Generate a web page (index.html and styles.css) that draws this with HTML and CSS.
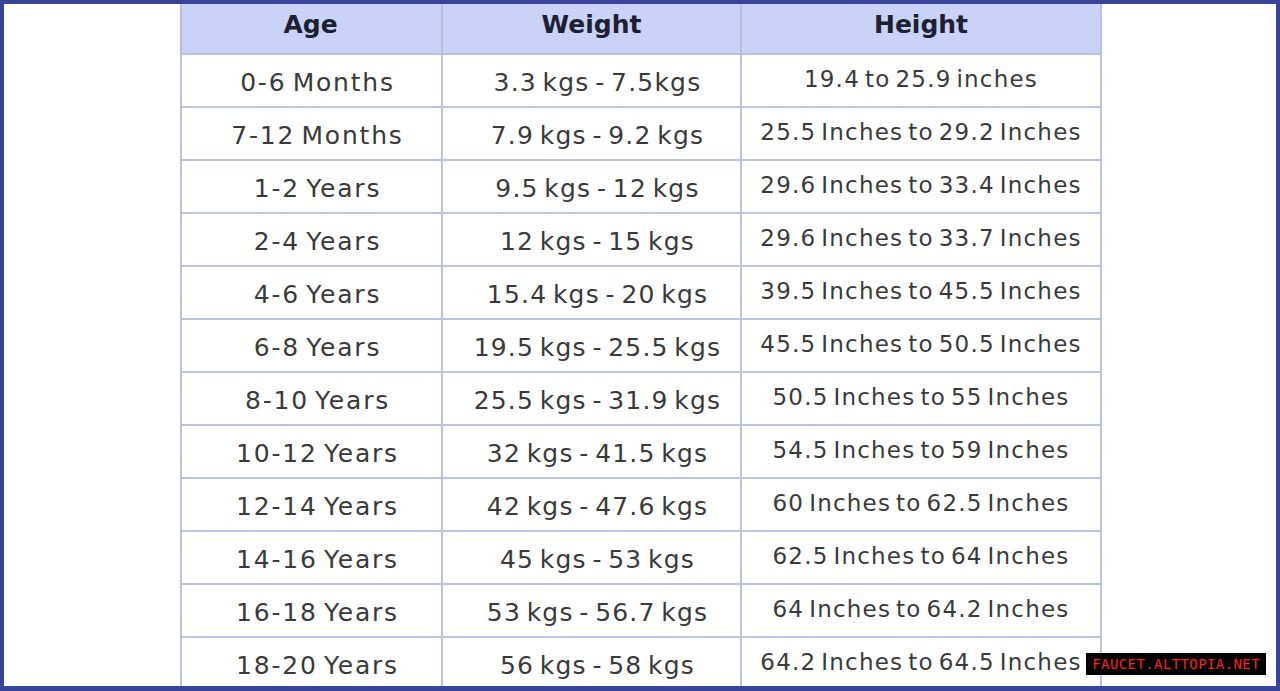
FILE: index.html
```html
<!DOCTYPE html>
<html>
<head>
  <title>Child Growth Chart</title>
  <link rel="stylesheet" href="styles.css">
</head>
<body>
  <div class="frame">
    <table class="growth-table">
      <thead>
        <tr>
          <th class="col-age">Age</th>
          <th class="col-weight">Weight</th>
          <th class="col-height">Height</th>
        </tr>
      </thead>
      <tbody>
        <tr><td class="age">0-6 Months</td><td>3.3 kgs - 7.5kgs</td><td class="up">19.4 to 25.9 inches</td></tr>
        <tr><td class="age">7-12 Months</td><td>7.9 kgs - 9.2 kgs</td><td class="up">25.5 Inches to 29.2 Inches</td></tr>
        <tr><td class="age">1-2 Years</td><td>9.5 kgs - 12 kgs</td><td class="up">29.6 Inches to 33.4 Inches</td></tr>
        <tr><td class="age">2-4 Years</td><td>12 kgs - 15 kgs</td><td class="up">29.6 Inches to 33.7 Inches</td></tr>
        <tr><td class="age">4-6 Years</td><td>15.4 kgs - 20 kgs</td><td class="up">39.5 Inches to 45.5 Inches</td></tr>
        <tr><td class="age">6-8 Years</td><td>19.5 kgs - 25.5 kgs</td><td class="up">45.5 Inches to 50.5 Inches</td></tr>
        <tr><td class="age">8-10 Years</td><td>25.5 kgs - 31.9 kgs</td><td class="up">50.5 Inches to 55 Inches</td></tr>
        <tr><td class="age">10-12 Years</td><td>32 kgs - 41.5 kgs</td><td class="up">54.5 Inches to 59 Inches</td></tr>
        <tr><td class="age">12-14 Years</td><td>42 kgs - 47.6 kgs</td><td class="up">60 Inches to 62.5 Inches</td></tr>
        <tr><td class="age">14-16 Years</td><td>45 kgs - 53 kgs</td><td class="up">62.5 Inches to 64 Inches</td></tr>
        <tr><td class="age">16-18 Years</td><td>53 kgs - 56.7 kgs</td><td class="up">64 Inches to 64.2 Inches</td></tr>
        <tr><td class="age">18-20 Years</td><td>56 kgs - 58 kgs</td><td class="up">64.2 Inches to 64.5 Inches</td></tr>
      </tbody>
    </table>
    <div class="watermark">FAUCET.ALTTOPIA.NET</div>
  </div>
</body>
</html>
```

FILE: styles.css
```css
html, body {
  margin: 0;
  padding: 0;
  background: #ffffff;
}
.frame {
  position: relative;
  box-sizing: border-box;
  width: 1280px;
  height: 691px;
  border: 4px solid #37449a;
  border-bottom-width: 5px;
  background: #ffffff;
  overflow: hidden;
}
.growth-table {
  margin-left: 176px;
  border-collapse: collapse;
  table-layout: fixed;
  width: 920px;
  font-family: "DejaVu Sans", "Open Sans", sans-serif;
}
.col-age {
  width: 261px;
}
.col-weight {
  width: 299px;
}
.col-height {
  width: 360px;
}
.growth-table th {
  height: 50px;
  box-sizing: border-box;
  padding: 0 0 8px 0;
  background-color: #c9d3f7;
  color: #1d2033;
  font-size: 25px;
  font-weight: 700;
  text-align: center;
  border: 2px solid #b9c1de;
  border-top: none;
}
.growth-table th.col-age {
  padding-right: 2px;
}
.growth-table td {
  height: 53px;
  box-sizing: border-box;
  padding: 4px 0 0 12px;
  color: #3a3a3a;
  font-size: 25px;
  letter-spacing: 1.2px;
  word-spacing: -3.5px;
  text-align: center;
  border: 2px solid #bcc3df;
  white-space: nowrap;
}
.growth-table td.age {
  letter-spacing: 1.8px;
}
.growth-table td.up {
  padding: 0 0 4px 0;
  font-size: 23px;
}
.watermark {
  position: absolute;
  right: 10px;
  bottom: 11px;
  background: #000000;
  color: #ff1f1f;
  font-family: "DejaVu Sans Mono", monospace;
  font-size: 14px;
  letter-spacing: 0.4px;
  padding: 2px 6px;
  line-height: 18px;
}
```
